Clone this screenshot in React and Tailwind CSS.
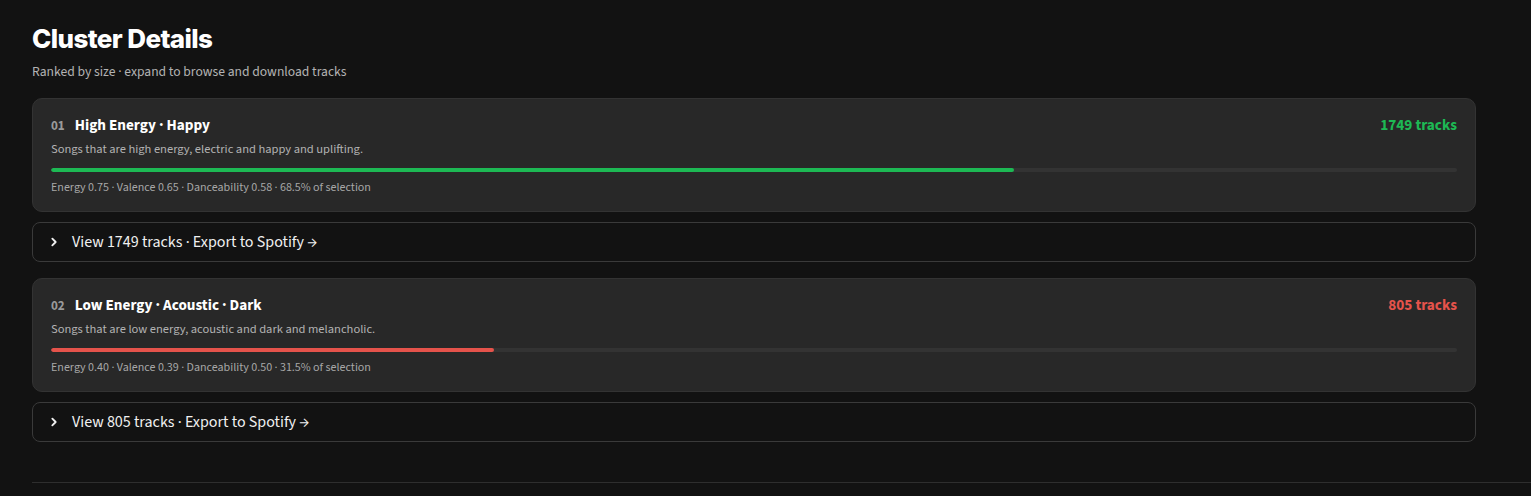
import React from 'react';

const clusters = [
  {
    id: '01',
    name: 'High Energy · Happy',
    desc: 'Songs that are high energy, electric and happy and uplifting.',
    tracks: 1749,
    pct: 68.5,
    stats: 'Energy 0.75 · Valence 0.65 · Danceability 0.58 · 68.5% of selection',
    color: 'text-[#1db954]',
    bar: 'bg-[#1db954]',
  },
  {
    id: '02',
    name: 'Low Energy · Acoustic · Dark',
    desc: 'Songs that are low energy, acoustic and dark and melancholic.',
    tracks: 805,
    pct: 31.5,
    stats: 'Energy 0.40 · Valence 0.39 · Danceability 0.50 · 31.5% of selection',
    color: 'text-[#e5534b]',
    bar: 'bg-[#e5534b]',
  },
];

function Chevron() {
  return (
    <svg width="10" height="10" viewBox="0 0 24 24" fill="none" stroke="currentColor" strokeWidth="4.5" strokeLinecap="round" strokeLinejoin="round">
      <path d="M8 4l8 8-8 8" />
    </svg>
  );
}

function ClusterCard({ c }) {
  return (
    <div className="mb-[16px]">
      <div className="bg-[#282828] border border-[#333] rounded-[10px] px-[18px] pt-[15px] pb-[15px]">
        <div className="flex items-center justify-between h-[22px]">
          <div className="flex items-baseline gap-[10px]">
            <span className="text-[13px] font-bold text-[#9a9a9a]">{c.id}</span>
            <span className="text-[15.2px] font-bold text-white">{c.name}</span>
          </div>
          <span className={`text-[15.2px] font-bold ${c.color}`}>{c.tracks} tracks</span>
        </div>
        <p className="text-[12.5px] text-[#b3b3b3] mt-[5px] leading-[17px]">{c.desc}</p>
        <div className="mt-[10px] h-[4px] rounded-full bg-[#333] overflow-hidden">
          <div className={`h-full rounded-full ${c.bar}`} style={{ width: `${c.pct}%` }} />
        </div>
        <p className="text-[12px] text-[#a7a7a7] mt-[8px] leading-[16px]">{c.stats}</p>
      </div>
      <button className="mt-[10px] w-full h-[40px] flex items-center gap-[13px] pl-[16px] pr-[18px] border border-[#3a3a3a] rounded-[8px] bg-[#121212] text-[#f0f0f0] text-[16px] text-left">
        <Chevron />
        <span>View {c.tracks} tracks · Export to Spotify →</span>
      </button>
    </div>
  );
}

export default function App() {
  return (
    <div className="min-h-screen bg-[#121212] text-white" style={{ fontFamily: '"Source Sans 3", Lato, "Noto Sans", sans-serif' }}>
      <div className="pl-[32px] pr-[55px] pt-[22px]">
        <h1 className="text-[26px] font-extrabold leading-[34px] tracking-[-0.6px] text-white" style={{ fontFamily: 'Inter, "Noto Sans", sans-serif' }}>
          Cluster Details
        </h1>
        <p className="text-[13.6px] text-[#b3b3b3] mt-[7px] leading-[18px]">Ranked by size · expand to browse and download tracks</p>
        <div className="mt-[17px]">
          {clusters.map((c) => (
            <ClusterCard key={c.id} c={c} />
          ))}
        </div>
        <div className="mt-[40px] border-t border-[#2e2e2e] -mr-[55px]" />
      </div>
    </div>
  );
}
